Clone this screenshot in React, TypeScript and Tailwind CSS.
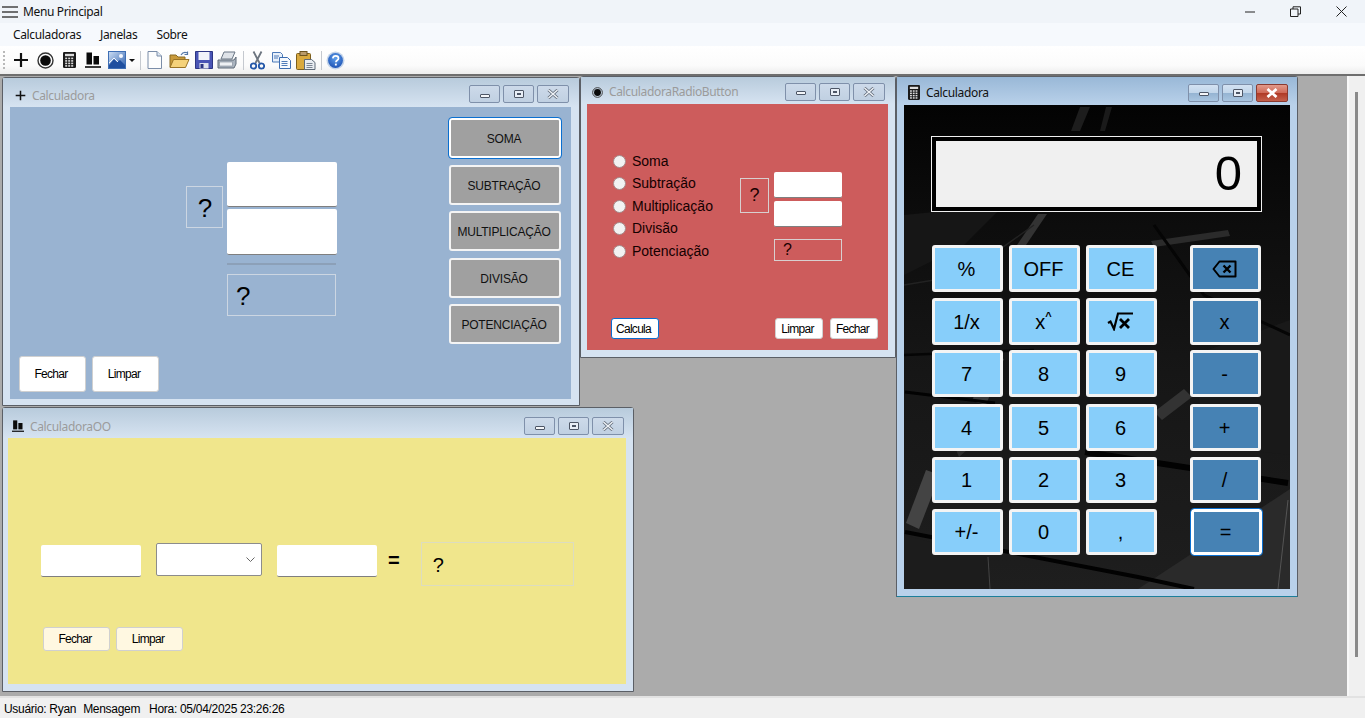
import React from "react";

const arial = "font-['Liberation_Sans',Arial,sans-serif]";
const ui = "font-['Noto_Sans',sans-serif]";

function PlusIcon({ s = 16 }: { s?: number }) {
  return (
    <svg width={s} height={s} viewBox="0 0 16 16">
      <path d="M8 1v14M1 8h14" stroke="#111" strokeWidth="2.2" fill="none" />
    </svg>
  );
}
function CircleIcon({ s = 17 }: { s?: number }) {
  return (
    <svg width={s} height={s} viewBox="0 0 17 17">
      <circle cx="8.5" cy="8.5" r="7.5" fill="none" stroke="#333" strokeWidth="1.4" />
      <circle cx="8.5" cy="8.5" r="5.3" fill="#0a0a0a" />
    </svg>
  );
}
function CalcIcon({ w = 13, h = 16 }: { w?: number; h?: number }) {
  const keys = [];
  for (let r = 0; r < 4; r++) for (let c = 0; c < 3; c++) keys.push(<rect key={r + "-" + c} x={2.2 + c * 3} y={5.6 + r * 2.5} width="2" height="1.6" fill="#ddd" />);
  return (
    <svg width={w} height={h} viewBox="0 0 13 16">
      <rect x="0" y="0" width="13" height="16" rx="1.2" fill="#1a1a1a" />
      <rect x="2" y="1.8" width="9" height="2.4" fill="#ddd" />
      {keys}
    </svg>
  );
}
function BarsIcon({ w = 16, h = 16 }: { w?: number; h?: number }) {
  return (
    <svg width={w} height={h} viewBox="0 0 16 16">
      <rect x="1.5" y="0.5" width="5.5" height="12" fill="#0b0b0b" />
      <rect x="8.5" y="4" width="5.5" height="8.5" fill="#0b0b0b" />
      <rect x="0" y="14.2" width="16" height="1.6" fill="#0b0b0b" />
    </svg>
  );
}
function ImageIcon() {
  return (
    <svg width="18" height="18" viewBox="0 0 18 18">
      <defs>
        <linearGradient id="img" x1="0" y1="0" x2="1" y2="1">
          <stop offset="0" stopColor="#cfe0f5" />
          <stop offset="1" stopColor="#2c5fae" />
        </linearGradient>
      </defs>
      <rect x="0.5" y="0.5" width="17" height="17" fill="url(#img)" stroke="#3f6fb5" />
      <circle cx="13" cy="5" r="2" fill="#f5f8ff" />
      <path d="M1 14l5-6 3 3 3-2 5 5v3H1z" fill="#1f4f9f" />
      <path d="M1 12l5-5 4 4" fill="none" stroke="#f2f6fc" strokeWidth="1" />
    </svg>
  );
}
function NewIcon() {
  return (
    <svg width="15" height="18" viewBox="0 0 15 18">
      <path d="M1 .5h9l4.5 4.5v12.5H1z" fill="#fdfdfd" stroke="#7b8da8" />
      <path d="M10 .5V5h4.5" fill="#dce6f2" stroke="#7b8da8" />
    </svg>
  );
}
function OpenIcon() {
  return (
    <svg width="21" height="18" viewBox="0 0 21 18">
      <path d="M1 4h6l2 2h7v10H1z" fill="#c99a3a" stroke="#8a6a22" />
      <path d="M1 16.5l3.5-8H20l-3.5 8z" fill="#f5d27a" stroke="#9a7426" />
      <path d="M12 4c1.5-2.5 4-3 6-2.2M18.5 0.5v3h-3" fill="none" stroke="#5578a8" strokeWidth="1.2" />
    </svg>
  );
}
function SaveIcon() {
  return (
    <svg width="18" height="18" viewBox="0 0 18 18">
      <path d="M.5.5h17v17H.5z" fill="#4a55b5" stroke="#2e3784" />
      <rect x="3.5" y="1" width="11" height="8" fill="#f1f3fa" />
      <rect x="4.5" y="12" width="9" height="5.5" fill="#dfe3ee" />
      <rect x="5.5" y="13" width="3" height="4" fill="#2e3784" />
    </svg>
  );
}
function PrintIcon() {
  return (
    <svg width="20" height="18" viewBox="0 0 20 18">
      <path d="M7 1h11l-3 7H4z" fill="#dfe3e8" stroke="#6b7785" />
      <path d="M1 9h16l2-3v7l-2 4H1z" fill="#aab4bf" stroke="#5f6b78" />
      <rect x="2.5" y="11" width="13" height="4" fill="#eef1f4" stroke="#7d8894" strokeWidth=".6" />
    </svg>
  );
}
function CutIcon() {
  return (
    <svg width="15" height="19" viewBox="0 0 15 19">
      <path d="M3.5 0.5l6 11.5M11.5 0.5l-6 11.5" stroke="#6e7680" strokeWidth="1.8" fill="none" />
      <circle cx="3.5" cy="15" r="2.7" fill="none" stroke="#2457a8" strokeWidth="1.8" />
      <circle cx="11.5" cy="15" r="2.7" fill="none" stroke="#2457a8" strokeWidth="1.8" />
    </svg>
  );
}
function CopyIcon() {
  return (
    <svg width="19" height="17" viewBox="0 0 19 17">
      <path d="M.5.5h8l2 2V10H.5z" fill="#e8f0fa" stroke="#4d7ab8" />
      <path d="M7.5 5.5h8l3 3v8h-11z" fill="#f6f9fd" stroke="#3c6cb0" />
      <path d="M9.5 9.5h6M9.5 11.5h6M9.5 13.5h6M2 4h5M2 6h4" stroke="#3c6cb0" strokeWidth=".9" />
    </svg>
  );
}
function PasteIcon() {
  return (
    <svg width="20" height="19" viewBox="0 0 20 19">
      <rect x="0.5" y="2.5" width="14" height="16" rx="1" fill="#d9a93e" stroke="#7d5f1c" />
      <rect x="4" y="0.5" width="7" height="4" fill="#b99a6a" stroke="#6c5320" />
      <path d="M8.5 8.5h7l3.5 3v7H8.5z" fill="#e9edf2" stroke="#5e6a78" />
      <path d="M10.5 12.5h6M10.5 14.5h6M10.5 16.5h6" stroke="#5e6a78" strokeWidth=".8" />
    </svg>
  );
}
function HelpIcon() {
  return (
    <svg width="19" height="19" viewBox="0 0 19 19">
      <defs>
        <radialGradient id="hlp" cx=".5" cy=".35" r=".7">
          <stop offset="0" stopColor="#5fa0ec" />
          <stop offset="1" stopColor="#1b4fb2" />
        </radialGradient>
      </defs>
      <circle cx="9.5" cy="9.5" r="9" fill="#c3d4ea" />
      <circle cx="9.5" cy="9.5" r="7.4" fill="url(#hlp)" />
      <path d="M6.8 7.4c.2-1.8 1.4-2.6 2.9-2.6 1.7 0 2.8 1 2.8 2.4 0 2-2.6 2.1-2.6 4.1" fill="none" stroke="#fff" strokeWidth="1.7" />
      <rect x="8.9" y="12.6" width="1.9" height="1.9" fill="#fff" />
    </svg>
  );
}
function Sep({ ml, mr }: { ml: string; mr: string }) {
  return <div className={`w-px h-[19px] bg-[#c5c9cf] ${ml} ${mr}`} />;
}

function ChildButtons({ active }: { active?: boolean }) {
  const base = "h-full rounded-[2px] border border-[#7f90aa] flex items-center justify-center";
  const grad = active
    ? "bg-[linear-gradient(#d3e2f2_0%,#c2d6ea_48%,#95b4d2_52%,#a9c5e0_100%)]"
    : "bg-[linear-gradient(#cddaea,#c0d0e2)]";
  return (
    <div className="flex gap-[3px] h-[18px]">
      <div className={`${base} ${grad} w-[31px]`}>
        <div className="w-[10px] h-[4px] mt-[3px] bg-[#f4f6f9] border border-[#4d5666] rounded-[1px]" />
      </div>
      <div className={`${base} ${grad} w-[31px]`}>
        <div className="w-[10px] h-[8px] bg-[#e8eef6] border border-[#4d5666] rounded-[1px] flex items-center justify-center">
          <div className="w-[4px] h-[2px] bg-[#4d5666]" />
        </div>
      </div>
      <div
        className={`${base} w-[32px] ${
          active
            ? "bg-[linear-gradient(#e29a8a_0%,#cf6a58_48%,#b03a26_52%,#c4604c_100%)] border-[#8a3a30]"
            : grad
        }`}
      >
        <svg width="12" height="10" viewBox="0 0 12 10">
          {!active && <path d="M1.5 1l9 8M10.5 1l-9 8" stroke="#5a6472" strokeWidth="3" fill="none" />}
          <path d="M1.5 1l9 8M10.5 1l-9 8" stroke={active ? "#fff" : "#eef2f7"} strokeWidth={active ? 2.8 : 1.6} fill="none" />
        </svg>
      </div>
    </div>
  );
}

function Win({
  pos,
  title,
  icon,
  active,
  titleCls,
  textCls,
  iconBox,
  frame,
  client,
  children,
}: {
  pos: string;
  title: string;
  icon: React.ReactNode;
  active?: boolean;
  titleCls: string;
  textCls: string;
  iconBox: string;
  frame: string;
  client: string;
  children: React.ReactNode;
}) {
  return (
    <div
      className={`absolute ${pos} flex flex-col border border-[#5b5f66] rounded-t-[3px] ${
        active ? "bg-[#b9d1ea] border-b-[#1c7f9a]" : "bg-[#d6e3f1]"
      }`}
    >
      <div
        className={`${titleCls} shrink-0 flex items-center ${
          active ? "bg-[linear-gradient(#99b8d7,#b9d1ea)]" : "bg-[linear-gradient(#b8cbdc,#d6e3f1)]"
        }`}
      >
        <div className={`flex items-center ${iconBox}`}>{icon}</div>
        <span className={`${ui} ${textCls} text-[12px] tracking-[-0.35px] ${active ? "text-[#111]" : "text-[#9b9b9b]"}`}>{title}</span>
        <div className="ml-auto">
          <ChildButtons active={active} />
        </div>
      </div>
      <div className={`flex-1 min-h-0 flex flex-col ${frame}`}>
        <div className={`flex-1 min-h-0 ${client}`}>{children}</div>
      </div>
    </div>
  );
}

function TextBox({ cls }: { cls: string }) {
  return <input readOnly className={`block bg-white rounded-[2px] border-b border-b-[#7f7f7f] outline-none ${cls}`} />;
}

function WinButton({ label, cls }: { label: string; cls: string }) {
  return (
    <button
      className={`${arial} pr-[3px] text-[12px] tracking-[-0.7px] text-black rounded-[3px] border border-[#d0d0d0] flex items-center justify-center ${cls}`}
    >
      {label}
    </button>
  );
}

function OpButton({ label, focus }: { label: string; focus?: boolean }) {
  return (
    <button
      className={`${arial} w-[112px] h-[40px] pt-[2px] pr-[2px] text-[12px] tracking-[-0.2px] text-[#111] bg-[#a0a0a0] rounded-[3px] border-[2px] ${
        focus ? "border-white outline outline-1 outline-[#0a6fd0]" : "border-[#f4f4f4]"
      }`}
    >
      {label}
    </button>
  );
}

function SoftRadio({ label, h }: { label: string; h: string }) {
  return (
    <label className={`flex items-center ${h}`}>
      <input type="radio" readOnly className="appearance-none w-[13px] h-[13px] rounded-full bg-[#f2f2f2] border border-[#a48a8a] shrink-0" />
      <span className={`${arial} ml-[6px] text-[14px] text-[#140000]`}>{label}</span>
    </label>
  );
}

function CalcBackground() {
  return (
    <svg className="absolute inset-0 w-full h-full" viewBox="0 0 386 484" preserveAspectRatio="none">
      <defs>
        <linearGradient id="calcbg" x1="0" y1="0" x2="0" y2="1">
          <stop offset="0" stopColor="#030303" />
          <stop offset=".25" stopColor="#0d0d0d" />
          <stop offset=".55" stopColor="#161616" />
          <stop offset="1" stopColor="#1e1e1e" />
        </linearGradient>
      </defs>
      <rect width="386" height="484" fill="url(#calcbg)" />
      <polygon points="234,484 386,384 386,484" fill="#2a2a2a" />
      <polygon points="0,430 84,452 86,484 0,484" fill="#1c1c1c" />
      <polygon points="290,250 386,215 386,350 300,340" fill="#191919" />
      <polygon points="0,110 100,100 60,140 0,170" fill="#161616" />
      <polygon points="176,2 186,2 176,26 167,26" fill="#1d1d1d" />
      <polygon points="202,2 208,2 201,26 196,26" fill="#1a1a1a" />
      <polygon points="134,109 143,109 122,140 113,140" fill="#333" />
      <polygon points="324,125 326,131 250,142 247,136" fill="#2b2b2b" />
      <polygon points="86,250 100,254 82,300 68,296" fill="#3a3a3a" />
      <polygon points="22,365 36,370 15,424 2,418" fill="#444" />
      <polygon points="280,284 288,292 258,315 250,307" fill="#333" />
      <polygon points="50,340 74,320 80,330 55,352" fill="#2d2d2d" />
      <path d="M1 287L91 298" stroke="#020202" strokeWidth="3" />
      <path d="M181 347L384 378" stroke="#020202" strokeWidth="6" />
      <path d="M1 427L234 472L290 484" stroke="#020202" strokeWidth="4" />
      <path d="M384 395L374 484" stroke="#555" strokeWidth="1" />
      <path d="M84 452L86 484" stroke="#444" strokeWidth="1" />
      <path d="M0 180L60 170L130 120" stroke="#222" strokeWidth="1.5" fill="none" />
      <path d="M250 120L300 190L386 230" stroke="#050505" strokeWidth="3" fill="none" />
      <path d="M0 250L130 245" stroke="#050505" strokeWidth="2.5" fill="none" />
    </svg>
  );
}

function SqrtGlyph() {
  return (
    <svg width="27" height="19" viewBox="0 0 27 19">
      <path d="M1 11l2.5-1.5 3.5 7.5 4-15.5h15" fill="none" stroke="#000" strokeWidth="2.2" />
      <path d="M13 7l9 9M22 7l-9 9" fill="none" stroke="#000" strokeWidth="2.8" />
    </svg>
  );
}
function BackGlyph() {
  return (
    <svg width="25" height="18" viewBox="0 0 25 18">
      <path d="M7.5 1.5H23.5V16.5H7.5L1.5 9z" fill="none" stroke="#000" strokeWidth="2" strokeLinejoin="round" />
      <path d="M11.5 5.5l7 7M18.5 5.5l-7 7" fill="none" stroke="#000" strokeWidth="2.4" />
    </svg>
  );
}

function CalcKey({ k, dark, focus }: { k: React.ReactNode; dark?: boolean; focus?: boolean }) {
  return (
    <button
      className={`${arial} w-[71px] h-full pr-[2px] text-[20px] text-black rounded-[3px] border-[3px] flex items-center justify-center ${
        dark ? "bg-[#4682b4]" : "bg-[#87cefa]"
      } ${focus ? "border-white outline outline-1 outline-[#0a6fd0]" : "border-[#f4f4f4]"}`}
    >
      {k}
    </button>
  );
}

const calcRows: { cls: string; keys: React.ReactNode[]; op: React.ReactNode; focus?: boolean; opMl: string }[] = [
  { cls: "mt-[33px] h-[47px]", keys: ["%", "OFF", "CE"], op: <BackGlyph />, opMl: "ml-[27px]" },
  {
    cls: "mt-[6px] h-[47px]",
    keys: [
      "1/x",
      <span key="x" className="flex items-start">
        x<span className="text-[11px] font-bold leading-[18px]">^</span>
      </span>,
      <SqrtGlyph key="s" />,
    ],
    op: "x",
    opMl: "ml-[27px]",
  },
  { cls: "mt-[5px] h-[47px]", keys: ["7", "8", "9"], op: "-", opMl: "ml-[27px]" },
  { cls: "mt-[7px] h-[47px]", keys: ["4", "5", "6"], op: "+", opMl: "ml-[27px]" },
  { cls: "mt-[6px] h-[46px]", keys: ["1", "2", "3"], op: "/", opMl: "ml-[27px]" },
  { cls: "mt-[6px] h-[46px]", keys: ["+/-", "0", ","], op: "=", focus: true, opMl: "ml-[28px]" },
];

export default function App() {
  return (
    <div className="w-[1365px] h-[718px] flex flex-col overflow-hidden bg-[#f0f0f0]">
      {/* Title bar */}
      <div className="h-[23px] shrink-0 bg-[#f0f4f9] flex items-center pl-[2px]">
        <svg width="16" height="12" viewBox="0 0 16 12">
          <path d="M0 1h16M0 6h16M0 11h16" stroke="#444" strokeWidth="1.6" />
        </svg>
        <span className={`${ui} ml-[5px] text-[12px] tracking-[-0.35px] text-[#111]`}>Menu Principal</span>
        <div className="ml-auto flex items-center">
          <svg width="10" height="2" viewBox="0 0 10 2" className="mr-[35px]">
            <path d="M0 1h10" stroke="#222" strokeWidth="1" />
          </svg>
          <svg width="11" height="11" viewBox="0 0 11 11" className="mr-[35px]">
            <path d="M.5 3h7.5v7.5H.5z M3 3V.8h7.5V8H8" fill="none" stroke="#222" />
          </svg>
          <svg width="11" height="11" viewBox="0 0 11 11" className="mr-[18px]">
            <path d="M.5.5l10 10M10.5.5l-10 10" fill="none" stroke="#222" strokeWidth="1" />
          </svg>
        </div>
      </div>
      {/* Menu */}
      <div className={`h-[23px] shrink-0 bg-[#f6f9fd] flex items-center pl-[13px] ${ui} text-[12px] tracking-[-0.35px] text-[#111]`}>
        <span>Calculadoras</span>
        <span className="ml-[19px]">Janelas</span>
        <span className="ml-[19px]">Sobre</span>
      </div>
      {/* Toolbar */}
      <div className="h-[28px] shrink-0 bg-[linear-gradient(#ffffff_0%,#fbfbfb_70%,#ededed_100%)] flex items-center pl-[3px]">
        <div className="w-[2px] h-[18px] border-l-2 border-dotted border-[#b9b9b9] mr-[8px]" />
        <PlusIcon />
        <div className="ml-[8px]"><CircleIcon /></div>
        <div className="ml-[9px]"><CalcIcon /></div>
        <div className="ml-[9px]"><BarsIcon /></div>
        <div className="ml-[7px]"><ImageIcon /></div>
        <svg width="6" height="3" viewBox="0 0 6 3" className="ml-[3px]"><path d="M0 0h6L3 3z" fill="#111" /></svg>
        <Sep ml="ml-[5px]" mr="mr-[6px]" />
        <NewIcon />
        <div className="ml-[7px]"><OpenIcon /></div>
        <div className="ml-[5px]"><SaveIcon /></div>
        <div className="ml-[4px]"><PrintIcon /></div>
        <Sep ml="ml-[6px]" mr="mr-[6px]" />
        <CutIcon />
        <div className="ml-[7px]"><CopyIcon /></div>
        <div className="ml-[5px]"><PasteIcon /></div>
        <Sep ml="ml-[5px]" mr="mr-[4px]" />
        <HelpIcon />
      </div>
      {/* Workspace + scrollbar */}
      <div className="h-[622px] shrink-0 flex border-t-[2px] border-t-[#6e6e6e]">
        <div className="relative w-[1347px] bg-[#ababab]">
          {/* Calculadora */}
          <Win
            pos="left-[2px] top-[1px] w-[578px] h-[329px]"
            title="Calculadora"
            icon={<PlusIcon s={11} />}
            titleCls="h-[29px] pt-[3px] pl-[12px] pr-[10px]"
            textCls="mt-[3px]"
            iconBox="w-[17px] mt-[3px]"
            frame="pl-[7px] pr-[8px] pb-[6px]"
            client="bg-[#99b3d1] flex"
          >
            <div className="w-[439px] flex flex-col">
              <div className="flex mt-[55px] ml-[217px]">
                <div className={`${arial} -ml-[41px] mt-[24px] w-[37px] h-[42px] pt-[2px] pl-[1px] border border-[#ccd6e2] flex items-center justify-center text-[26px] text-black`}>?</div>
                <div className="ml-[4px]">
                  <TextBox cls="w-[110px] h-[45px]" />
                  <TextBox cls="w-[110px] h-[46px] mt-[2px]" />
                  <div className="w-[109px] h-[2px] bg-[#8ca0b8] mt-[8px]" />
                  <div className={`${arial} mt-[9px] w-[109px] h-[42px] pt-[2px] border border-[#ccd6e2] flex items-center pl-[8px] text-[26px] text-black`}>?</div>
                </div>
              </div>
              <div className="mt-auto mb-[7px] ml-[9px] flex gap-[6px]">
                <WinButton label="Fechar" cls="w-[67px] h-[36px] bg-white" />
                <WinButton label="Limpar" cls="w-[67px] h-[36px] bg-white" />
              </div>
            </div>
            <div className="pt-[11px] flex flex-col gap-[6.5px]">
              <OpButton label="SOMA" focus />
              <OpButton label="SUBTRAÇÃO" />
              <OpButton label="MULTIPLICAÇÃO" />
              <OpButton label="DIVISÃO" />
              <OpButton label="POTENCIAÇÃO" />
            </div>
          </Win>

          {/* CalculadoraRadioButton */}
          <Win
            pos="left-[580px] top-0 w-[316px] h-[282px]"
            title="CalculadoraRadioButton"
            icon={<CircleIcon s={11} />}
            titleCls="h-[27px] pt-[2px] pl-[11px] pr-[10px]"
            textCls="mt-[1px]"
            iconBox="w-[17px] mt-[1px]"
            frame="pl-[6px] pr-[7px] pb-[7px]"
            client="bg-[#cd5c5c] flex flex-col"
          >
            <div className="flex">
              <div className="w-[153px] pl-[26px] pt-[46px]">
                <SoftRadio label="Soma" h="h-[22.5px]" />
                <SoftRadio label="Subtração" h="h-[22.5px]" />
                <SoftRadio label="Multiplicação" h="h-[22.5px]" />
                <SoftRadio label="Divisão" h="h-[22.5px]" />
                <SoftRadio label="Potenciação" h="h-[22.5px]" />
              </div>
              <div className={`${arial} mt-[74px] w-[29px] h-[35px] border border-[#d8d0d0] flex items-center justify-center text-[18px] text-[#1a0000]`}>?</div>
              <div className="ml-[5px] mt-[68px]">
                <TextBox cls="w-[68px] h-[26px]" />
                <TextBox cls="w-[68px] h-[26px] mt-[3px]" />
                <div className={`${arial} mt-[12px] w-[68px] h-[22px] border border-[#d8d0d0] flex items-center pl-[8px] text-[16px] text-[#1a0000]`}>?</div>
              </div>
            </div>
            <div className="mt-auto mb-[11px] flex pl-[24px] pr-[10px]">
              <WinButton label="Calcula" cls="w-[48px] h-[21px] bg-white !border-[#0a6fd0]" />
              <WinButton label="Limpar" cls="ml-auto w-[48px] h-[21px] bg-white" />
              <WinButton label="Fechar" cls="ml-[7px] w-[48px] h-[21px] bg-white" />
            </div>
          </Win>

          {/* Calculadora (active) */}
          <Win
            pos="left-[896px] top-0 w-[402px] h-[521px]"
            title="Calculadora"
            icon={<CalcIcon w={12} h={15} />}
            active
            titleCls="h-[28px] pt-[3px] pl-[11px] pr-[9px]"
            textCls="mt-[1px]"
            iconBox="w-[18px]"
            frame="px-[7px] pb-[7px]"
            client="bg-black relative"
          >
            <CalcBackground />
            <div className="relative pl-[27px] pt-[31px]">
              <div className="w-[331px] h-[76px] border border-[#f0f0f0] bg-black p-[4px]">
                <div className={`${arial} h-full bg-[#f0f0f0] flex items-center justify-end pr-[15px] text-[49px] text-black`}>0</div>
              </div>
              {calcRows.map((r, i) => (
                <div key={i} className={`flex gap-[6px] pl-px ${r.cls}`}>
                  {r.keys.map((k, j) => (
                    <CalcKey key={j} k={k} />
                  ))}
                  <div className={`${r.opMl} h-full`}>
                    <CalcKey k={r.op} dark focus={r.focus} />
                  </div>
                </div>
              ))}
            </div>
          </Win>

          {/* CalculadoraOO */}
          <Win
            pos="left-[2px] top-[331px] w-[632px] h-[285px]"
            title="CalculadoraOO"
            icon={<BarsIcon w={12} h={12} />}
            titleCls="h-[30px] pt-[6px] pl-[9px] pr-[9px]"
            textCls="mt-[1px]"
            iconBox="w-[18px]"
            frame="pl-[5px] pr-[7px] pb-[7px]"
            client="bg-[#f0e68c] flex flex-col"
          >
            <div className="flex items-start pl-[33px] mt-[105px]">
              <TextBox cls="mt-[2px] w-[100px] h-[32px]" />
              <div className="ml-[15px] w-[106px] h-[33px] bg-white rounded-[2px] border border-[#8c8c8c] flex items-center justify-end pr-[6px]">
                <svg width="9" height="6" viewBox="0 0 9 6"><path d="M.5.5l4 4 4-4" fill="none" stroke="#666" /></svg>
              </div>
              <TextBox cls="ml-[15px] mt-[2px] w-[100px] h-[32px]" />
              <span className={`${arial} ml-[11px] mt-[3px] text-[20px] font-bold text-black leading-[28px]`}>=</span>
              <div className={`${arial} ml-[21px] -mt-[1px] w-[153px] h-[44px] border border-[#dcdcc0] flex items-center pl-[11px] pt-[2px] text-[20px] text-black`}>?</div>
            </div>
            <div className="mt-auto mb-[33px] ml-[35px] flex gap-[6px]">
              <WinButton label="Fechar" cls="w-[67px] h-[24px] bg-[#fff8e1]" />
              <WinButton label="Limpar" cls="w-[67px] h-[24px] bg-[#fff8e1]" />
            </div>
          </Win>
        </div>
        <div className="flex-1 border-l-[2px] border-l-[#f8f8f8] bg-[#f0f0f0] pl-[6px] pt-[16px]">
          <div className="w-[3px] h-[565px] bg-[#8a8a8a]" />
        </div>
      </div>
      {/* Status */}
      <div className={`flex-1 border-t-[2px] border-t-[#e2e2e2] bg-[#f0f0f0] flex items-center pl-[4px] pt-[2px] ${arial} text-[12px] tracking-[-0.3px] text-black`}>
        <span>Usuário: Ryan</span>
        <span className="ml-[7px]">Mensagem</span>
        <span className="ml-[9px]">Hora: 05/04/2025 23:26:26</span>
      </div>
    </div>
  );
}
